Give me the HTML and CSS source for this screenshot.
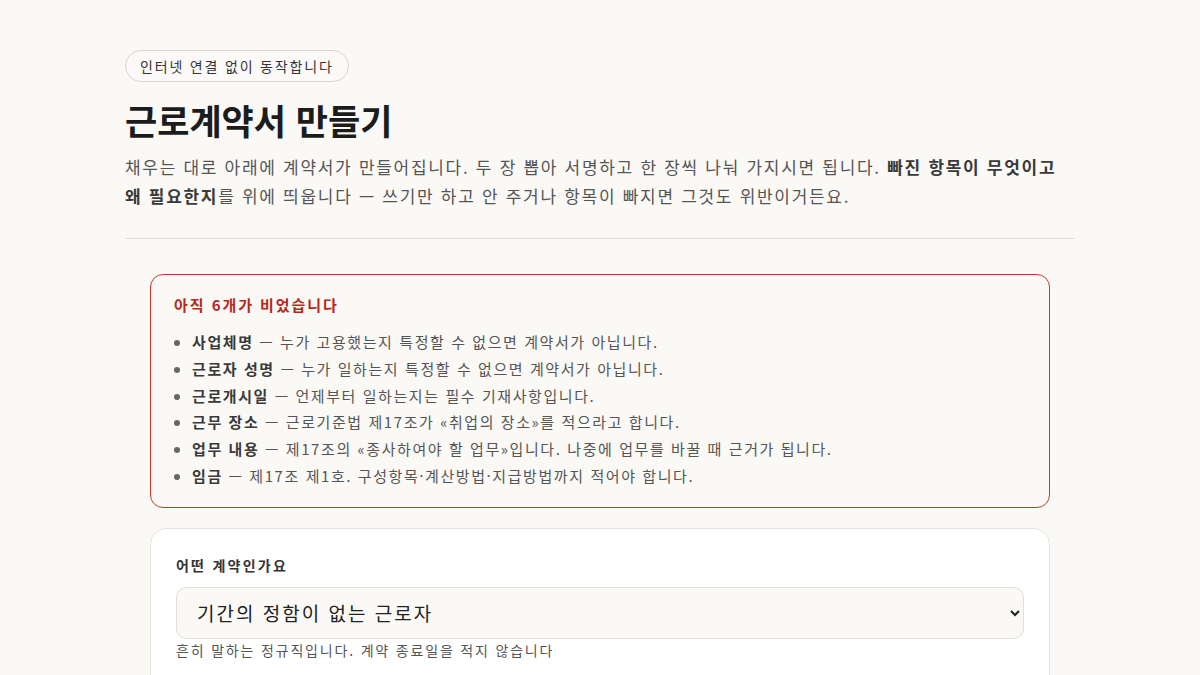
FILE: index.html
```html
<!DOCTYPE html>
<html lang="ko">
<head>
<meta charset="utf-8">
<title>근로계약서 만들기</title>
<link rel="stylesheet" href="styles.css">
</head>
<body>
<main class="page">
  <header class="intro">
    <span class="badge">인터넷 연결 없이 동작합니다</span>
    <h1 class="title">근로계약서 만들기</h1>
    <p class="lead">채우는 대로 아래에 계약서가 만들어집니다. 두 장 뽑아 서명하고 한 장씩 나눠 가지시면 됩니다. <strong>빠진 항목이 무엇이고 왜 필요한지</strong>를 위에 띄웁니다 — 쓰기만 하고 안 주거나 항목이 빠지면 그것도 위반이거든요.</p>
  </header>
  <hr class="divider">
  <section class="content">
    <div class="alert">
      <h2 class="alert-title">아직 6개가 비었습니다</h2>
      <ul class="alert-list">
        <li><strong>사업체명</strong> — 누가 고용했는지 특정할 수 없으면 계약서가 아닙니다.</li>
        <li><strong>근로자 성명</strong> — 누가 일하는지 특정할 수 없으면 계약서가 아닙니다.</li>
        <li><strong>근로개시일</strong> — 언제부터 일하는지는 필수 기재사항입니다.</li>
        <li><strong>근무 장소</strong> — 근로기준법 제17조가 «취업의 장소»를 적으라고 합니다.</li>
        <li><strong>업무 내용</strong> — 제17조의 «종사하여야 할 업무»입니다. 나중에 업무를 바꿀 때 근거가 됩니다.</li>
        <li><strong>임금</strong> — 제17조 제1호. 구성항목·계산방법·지급방법까지 적어야 합니다.</li>
      </ul>
    </div>
    <div class="card">
      <label class="field-label" for="kind">어떤 계약인가요</label>
      <select id="kind" class="select">
        <option>기간의 정함이 없는 근로자</option>
        <option>기간제 근로자</option>
        <option>단시간 근로자</option>
      </select>
      <p class="hint">흔히 말하는 정규직입니다. 계약 종료일을 적지 않습니다</p>
    </div>
  </section>
</main>
</body>
</html>
```

FILE: styles.css
```css
* { box-sizing: border-box; }
html, body { margin: 0; padding: 0; }
body {
  background: #faf9f6;
  color: #222;
  font-family: "Noto Sans CJK KR", "Noto Sans", sans-serif;
}
.page {
  width: 950px;
  margin: 0 auto;
  padding-top: 50px;
}
.intro { display: flex; flex-direction: column; align-items: flex-start; }
.badge {
  display: inline-block;
  border: 1px solid #d8d5cf;
  border-radius: 999px;
  padding: 0 14px;
  height: 32px;
  line-height: 30px;
  font-size: 14px;
  letter-spacing: 0.13em;
  color: #333;
  background: #fbfaf8;
}
.title {
  margin: 16px 0 0;
  font-size: 35px;
  line-height: 44px;
  font-weight: 700;
  color: #1c1c1c;
}
.lead {
  margin: 10px 0 0;
  font-size: 17px;
  line-height: 29px;
  letter-spacing: 0.1em;
  color: #555;
}
.lead strong { color: #3a3a3a; font-weight: 700; }
.divider {
  margin: 28px 0 0;
  border: 0;
  border-top: 1px solid #deddd8;
  height: 0;
}
.content {
  padding: 35px 25px 0;
  display: flex;
  flex-direction: column;
  gap: 20px;
}
.alert {
  border: 1.5px solid #c8382a;
  border-radius: 13px;
  padding: 18px 23px 17px;
  background: #faf9f6;
}
.alert-title {
  margin: 0 0 12px;
  font-size: 15px;
  line-height: 24px;
  font-weight: 700;
  letter-spacing: 0.13em;
  color: #b8271b;
}
.alert-list {
  margin: 0;
  padding-left: 18px;
  font-size: 15px;
  line-height: 26.8px;
  letter-spacing: 0.105em;
  color: #555;
}
.alert-list li::marker { color: #666; }
.alert-list strong { color: #3a3a3a; }
.card {
  background: #fff;
  border: 1px solid #e6e3dc;
  border-radius: 16px;
  padding: 25px 25px 40px;
  display: flex;
  flex-direction: column;
}
.field-label {
  font-size: 14px;
  line-height: 22px;
  font-weight: 700;
  letter-spacing: 0.16em;
  color: #333;
}
.select {
  margin-top: 11px;
  width: 100%;
  height: 52px;
  border: 1px solid #e2dfd8;
  border-radius: 10px;
  background: #faf9f6;
  padding: 0 16px;
  font-family: "Noto Sans CJK KR", "Noto Sans", sans-serif;
  font-size: 19px;
  letter-spacing: 0.105em;
  color: #222;
}
.hint {
  margin: 0;
  font-size: 14px;
  line-height: 22px;
  letter-spacing: 0.13em;
  color: #555;
}
```
